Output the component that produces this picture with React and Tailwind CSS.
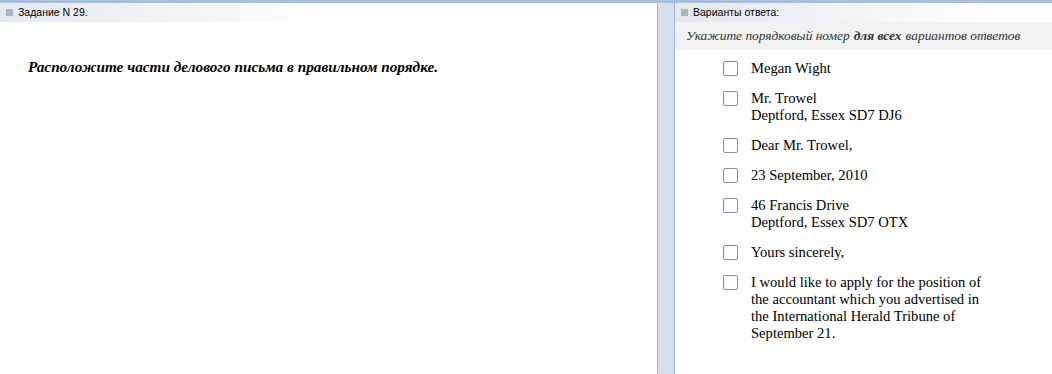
import React from 'react';

const options = [
    ['Megan Wight'],
    ['Mr. Trowel', 'Deptford, Essex SD7 DJ6'],
    ['Dear Mr. Trowel,'],
    ['23 September, 2010'],
    ['46 Francis Drive', 'Deptford, Essex SD7 OTX'],
    ['Yours sincerely,'],
    ['I would like to apply for the position of the accountant which you advertised in the International Herald Tribune of September 21.'],
];

const PanelHeader = ({ title }) => (
    <div className="flex items-center h-[19px] w-[330px] bg-gradient-to-r from-[#e4e9f0] via-[#f1f3f7] to-white pl-[6px]">
        <span className="w-[7px] h-[7px] bg-[#a9b5c6] mr-[5px]"></span>
        <span className="text-[10.5px] text-black" style={{ fontFamily: '"Liberation Sans", Arial, sans-serif' }}>{title}</span>
    </div>
);

const App = () => {
    return (
        <div className="w-[1052px] h-[374px] bg-white flex flex-col overflow-hidden">
            <div className="h-[3px] bg-[#a9c0dd]"></div>
            <div className="flex flex-1">
                {/* Task */}
                <div className="w-[657px] flex flex-col">
                    <PanelHeader title="Задание N 29." />
                    <p
                        className="pl-[28px] pt-[34px] text-[15.25px] font-bold italic text-black"
                        style={{ fontFamily: '"Liberation Serif", "Times New Roman", serif' }}
                    >
                        Расположите части делового письма в правильном порядке.
                    </p>
                </div>

                {/* Splitter */}
                <div className="w-[18px] bg-[#d3dfed] border-l border-r border-[#a3b6cf] bg-[repeating-linear-gradient(0deg,#d3dfed_0px,#d3dfed_3px,#dae4f0_3px,#dae4f0_4px)]"></div>

                {/* Answers */}
                <div className="flex-1 flex flex-col" style={{ fontFamily: '"Liberation Serif", "Times New Roman", serif' }}>
                    <PanelHeader title="Варианты ответа:" />
                    <div className="h-[28px] bg-[#f2f2f2] flex items-center pl-[11px] text-[13.4px] italic text-[#333]">
                        Укажите порядковый номер <b className="mx-[4px]">для всех</b> вариантов ответов
                    </div>
                    <div className="flex flex-col gap-[13px] pt-[10px] pl-[48px]">
                        {options.map((lines, i) => (
                            <div key={i} className="flex items-start">
                                <span className="mt-[1px] w-[15px] h-[15px] border border-[#7d92b3] rounded-[2px] bg-white shrink-0"></span>
                                <div className="ml-[13px] w-[234px] text-[14.6px] leading-[17px] text-black">
                                    {lines.map((l, j) => (
                                        <div key={j}>{l}</div>
                                    ))}
                                </div>
                            </div>
                        ))}
                    </div>
                </div>
            </div>
        </div>
    );
};

export default App;
